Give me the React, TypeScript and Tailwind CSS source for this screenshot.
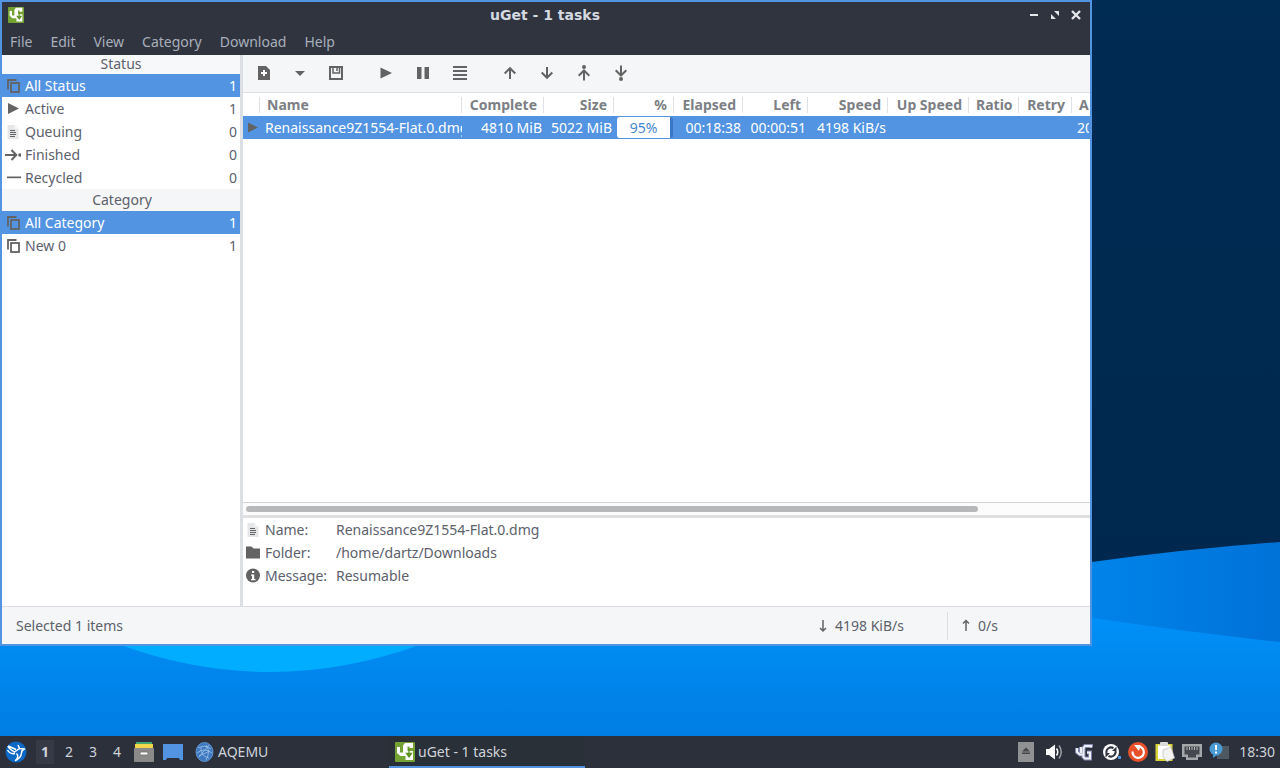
import type { ReactNode } from "react";

const menus = ["File", "Edit", "View", "Category", "Download", "Help"];

const INK = "#636363";

function CopyIcon() {
  return (
    <svg width="16" height="16" viewBox="0 0 16 16" fill="none" stroke={INK} strokeWidth="1.800">
      <path d="M3 11.500V2H11.500" />
      <rect x="6" y="5" width="8" height="9" />
    </svg>
  );
}

function PlayIcon() {
  return (
    <svg width="16" height="16" viewBox="0 0 16 16" fill={INK}>
      <path d="M3 2L14 7.500L3 13Z" />
    </svg>
  );
}

function TextFileIcon() {
  return (
    <svg width="16" height="16" viewBox="0 0 16 16">
      <path d="M2.500 1H9.500L13.500 5V15H2.500Z" fill="#e4e6e7" />
      <path d="M9.500 1V5H13.500Z" fill="#f4f5f6" />
      <path d="M5 6.500H10M5 8.500H11M5 10.500H11M5 12.500H10" stroke={INK} />
    </svg>
  );
}

function FinishedIcon() {
  return (
    <svg width="16" height="16" viewBox="0 0 16 16" fill="none" stroke={INK} strokeWidth="2">
      <path d="M2 8H11M6.500 3L11.300 8L6.500 13" />
      <circle cx="15" cy="8" r="1.800" fill={INK} stroke="none" />
      <path d="M0 8H3" />
    </svg>
  );
}

function MinusIcon() {
  return (
    <svg width="16" height="16" viewBox="0 0 16 16">
      <path d="M2 6.500H16V8.200H2Z" fill={INK} />
    </svg>
  );
}

function FolderIcon() {
  return (
    <svg width="16" height="16" viewBox="0 0 16 16">
      <path d="M1 1.500H6.500L8.500 3.500H15V13.500H1Z" fill={INK} />
    </svg>
  );
}

function InfoIcon() {
  return (
    <svg width="16" height="16" viewBox="0 0 16 16">
      <circle cx="8" cy="7.500" r="7" fill={INK} />
      <rect x="7" y="3" width="2.200" height="2" fill="#fff" />
      <path d="M6 6.500H9.200V11H10.500V12.200H6V11H7V7.700H6Z" fill="#fff" />
    </svg>
  );
}

function UgetIcon({ className }: { className: string }) {
  return (
    <svg className={className} viewBox="0 0 20 20">
      <rect width="20" height="20" rx="1" fill="#74a333" />
      <path d="M10 1H18V6H14.500V4.500H12.500V9H18V18H10.500V14H5.500L2 11V5H5V10.500H8V3.500Z" fill="#fff" />
      <path d="M14 6.500V12M11.500 11.500H16.500L14 15Z" fill="#5c8f22" stroke="#5c8f22" strokeWidth="1.300" />
    </svg>
  );
}

type Item = { label: string; count: number; icon: ReactNode; selected?: boolean };

const statusItems: Item[] = [
  { label: "All Status", count: 1, icon: <CopyIcon />, selected: true },
  { label: "Active", count: 1, icon: <PlayIcon /> },
  { label: "Queuing", count: 0, icon: <TextFileIcon /> },
  { label: "Finished", count: 0, icon: <FinishedIcon /> },
  { label: "Recycled", count: 0, icon: <MinusIcon /> },
];

const categoryItems: Item[] = [
  { label: "All Category", count: 1, icon: <CopyIcon />, selected: true },
  { label: "New 0", count: 1, icon: <CopyIcon /> },
];

function ItemList({ items, label }: { items: Item[]; label: string }) {
  return (
    <ul aria-label={label}>
      {items.map((item) => (
        <li key={item.label}>
          <button
            className={
              item.selected
                ? "flex h-[23px] w-full items-center gap-1 bg-[#5294e2] pr-[3px] pl-[3px] text-left text-white"
                : "flex h-[23px] w-full items-center gap-1 pr-[3px] pl-[3px] text-left"
            }
          >
            {item.icon}
            <span className="grow">{item.label}</span>
            <span>{item.count}</span>
          </button>
        </li>
      ))}
    </ul>
  );
}

function ToolButton({ label, narrow, children }: { label: string; narrow?: boolean; children: ReactNode }) {
  return (
    <button
      aria-label={label}
      className={narrow ? "flex h-9 w-[34px] items-center justify-center" : "flex h-9 w-9 items-center justify-center"}
    >
      <svg width="16" height="16" viewBox="0 0 16 16" fill="none" stroke={INK} strokeWidth="2">
        {children}
      </svg>
    </button>
  );
}

function Toolbar() {
  return (
    <div className="flex h-[38px] shrink-0 items-start gap-[14px] border-b border-[#dcdfe3] bg-[#f5f6f7] pl-[3px]">
      <div className="flex gap-px">
        <ToolButton label="New download">
          <path d="M2 1H10L14 5V15H2Z" fill={INK} stroke="none" />
          <path d="M8 5V11M5 8H11" stroke="#fff" />
        </ToolButton>
        <ToolButton label="More download types" narrow>
          <path d="M3 6H13L8 11Z" fill={INK} stroke="none" />
        </ToolButton>
        <ToolButton label="Save">
          <path d="M2 2H14V14H2Z" />
          <path d="M5 2V8H11.500V2" strokeWidth="1.500" />
          <path d="M9 3V6" strokeWidth="1.500" />
        </ToolButton>
      </div>
      <div className="flex gap-px">
        <ToolButton label="Start">
          <path d="M2.500 2.500L14 8L2.500 13.500Z" fill={INK} stroke="none" />
        </ToolButton>
        <ToolButton label="Pause">
          <path d="M2 2H6.500V14H2ZM9.500 2H14V14H9.500Z" fill={INK} stroke="none" />
        </ToolButton>
        <ToolButton label="Properties">
          <path d="M1 2H15M1 6H15M1 10H15M1 14H15" />
        </ToolButton>
      </div>
      <div className="flex gap-px">
        <ToolButton label="Move up">
          <path d="M8 14V3.500M2.700 8.500L8 3.200L13.300 8.500" />
        </ToolButton>
        <ToolButton label="Move down">
          <path d="M8 2V12.500M2.700 7.500L8 12.800L13.300 7.500" />
        </ToolButton>
        <ToolButton label="Move to top">
          <path d="M8 15.500V6M2.700 10.800L8 5.500L13.300 10.800" />
          <circle cx="8" cy="2" r="2" fill={INK} stroke="none" />
        </ToolButton>
        <ToolButton label="Move to bottom">
          <path d="M8 0.500V10M2.700 5.200L8 10.500L13.300 5.200" />
          <circle cx="8" cy="14" r="2" fill={INK} stroke="none" />
        </ToolButton>
      </div>
    </div>
  );
}

const columns = [
  { title: "", value: "", width: "w-[18px]" },
  { title: "Name", value: "Renaissance9Z1554-Flat.0.dmg", width: "w-[202px]", left: true },
  { title: "Complete", value: "4810 MiB", width: "w-[82px]" },
  { title: "Size", value: "5022 MiB", width: "w-[70px]" },
  { title: "%", value: "95%", width: "w-[60px]" },
  { title: "Elapsed", value: "00:18:38", width: "w-[69px]" },
  { title: "Left", value: "00:00:51", width: "w-[65px]" },
  { title: "Speed", value: "4198 KiB/s", width: "w-[80px]" },
  { title: "Up Speed", value: "", width: "w-[81px]" },
  { title: "Ratio", value: "", width: "w-[50px]" },
  { title: "Retry", value: "", width: "w-[53px]" },
  { title: "A", value: "20", width: "", left: true },
];

function Downloads() {
  return (
    <div className="min-h-0 grow overflow-hidden bg-white">
      <table className="w-full table-fixed border-collapse whitespace-nowrap">
        <thead>
          <tr className="h-[23px] text-[#7c7f84]">
            {columns.map((c, i) => (
              <th key={i} scope="col" className={"p-0 font-bold " + c.width}>
                <div
                  className={
                    (c.left ? "text-left " : "text-right ") +
                    (i === columns.length - 1 ? "" : "border-r border-[#dfe1e4] ") +
                    "mr-px h-4 pr-[6px] pl-[6px] leading-4"
                  }
                >
                  {c.title}
                </div>
              </th>
            ))}
          </tr>
        </thead>
        <tbody>
          <tr className="h-[23px] bg-[#5294e2] text-white">
            {columns.map((c, i) => (
              <td key={i} className={(c.left ? "pl-1 text-left" : "text-right") + " py-0 pr-[3px]"}>
                {i === 0 && (
                  <svg className="ml-1" width="12" height="12" viewBox="0 0 12 12" aria-label="Active">
                    <path d="M1 0.500L11 5.500L1 10.500Z" fill={INK} />
                  </svg>
                )}
                {c.title === "%" ? (
                  <div className="-mr-px ml-[2px] h-[21px] rounded-[3px] border-r-3 border-[#3a76c4] bg-white text-center leading-[21px] text-[#4a86cf]">
                    {c.value}
                  </div>
                ) : (
                  <div className={c.left ? "-mr-[2px] overflow-hidden" : ""}>{c.value}</div>
                )}
              </td>
            ))}
          </tr>
        </tbody>
      </table>
    </div>
  );
}

const details = [
  { icon: <TextFileIcon />, label: "Name:", value: "Renaissance9Z1554-Flat.0.dmg" },
  { icon: <FolderIcon />, label: "Folder:", value: "/home/dartz/Downloads" },
  { icon: <InfoIcon />, label: "Message:", value: "Resumable" },
];

function AppWindow() {
  return (
    <main className="flex min-h-0 min-w-0 grow flex-col border-2 border-[#5294e2] bg-white text-[#5c616c]">
      <header className="flex h-[26px] shrink-0 items-center bg-[#2f343f] px-[6px] text-[#d5d9e0]">
        <UgetIcon className="h-4 w-4" />
        <h1 className="grow pl-10 text-center font-[family-name:'DejaVu_Sans'] text-sm font-bold">uGet - 1 tasks</h1>
        <div className="flex gap-[5px]">
          <button aria-label="Minimize">
            <svg width="16" height="16" viewBox="0 0 16 16">
              <path d="M4 7H12V9H4Z" fill="#e4e6ea" />
            </svg>
          </button>
          <button aria-label="Maximize">
            <svg width="16" height="16" viewBox="0 0 16 16" fill="#e4e6ea">
              <path d="M7 4H12V9ZM4 7V12H9Z" />
            </svg>
          </button>
          <button aria-label="Close">
            <svg width="16" height="16" viewBox="0 0 16 16">
              <path d="M4 4L12 12M12 4L4 12" stroke="#e4e6ea" strokeWidth="2.400" />
            </svg>
          </button>
        </div>
      </header>
      <nav className="flex h-[27px] shrink-0 items-center gap-[18px] bg-[#2f343f] pl-2 text-[#a9afbb]">
        {menus.map((m) => (
          <button key={m}>{m}</button>
        ))}
      </nav>

      <div className="flex min-h-0 grow">
        <aside className="w-[241px] shrink-0 border-r-3 border-[#dcdfe3]">
          <h2 className="h-[19px] bg-[#f7f8f9] text-center leading-[18px]">Status</h2>
          <ItemList items={statusItems} label="Status" />
          <h2 className="h-[22px] bg-[#f5f6f7] pl-[2px] text-center leading-[22px]">Category</h2>
          <ItemList items={categoryItems} label="Category" />
        </aside>
        <section className="flex min-w-0 grow flex-col">
          <Toolbar />
          <Downloads />
          <div className="h-[13px] shrink-0 border-t border-[#d3d6d9] bg-[#fcfcfc] px-[3px] pt-[3px]">
            <div className="h-[6px] w-[87%] rounded-full bg-[#b7b8b9]" />
          </div>
          <dl className="h-[91px] shrink-0 border-t-3 border-[#dedfe1]">
            {details.map((d) => (
              <div key={d.label} className="flex h-[23px] items-center pl-[2px]">
                {d.icon}
                <dt className="w-[75px] pl-1">{d.label}</dt>
                <dd>{d.value}</dd>
              </div>
            ))}
          </dl>
        </section>
      </div>

      <footer className="flex h-[38px] shrink-0 items-center border-t border-[#d9dce0] bg-[#f5f6f7] pl-[14px]">
        <span className="grow">Selected 1 items</span>
        <span className="flex h-7 w-[131px] items-center gap-[6px] border-r border-[#dcdfe3]">
          <svg width="12" height="14" viewBox="0 0 12 14" fill="none" stroke={INK} strokeWidth="1.500" aria-label="Download speed">
            <path d="M6 1V11.500M3 9L6 12L9 9" />
          </svg>
          4198 KiB/s
        </span>
        <span className="flex w-[142px] items-center gap-[6px] pl-3">
          <svg width="12" height="14" viewBox="0 0 12 14" fill="none" stroke={INK} strokeWidth="1.500" aria-label="Upload speed">
            <path d="M6 12V1.500M3 4.500L6 1.500L9 4.500" />
          </svg>
          0/s
        </span>
      </footer>
    </main>
  );
}

const tray: { label: string; art: ReactNode }[] = [
  {
    label: "Removable media",
    art: (
      <>
        <rect x="-2" y="0" width="16" height="20" fill="#8f9193" />
        <path d="M2 9.500L6 5.500L10 9.500ZM2 10.500H10V12H2Z" fill="#45474a" />
      </>
    ),
  },
  {
    label: "Volume",
    art: (
      <>
        <path d="M-1 7H2L8 2.500V17.500L2 13H-1Z" fill="#fff" />
        <path d="M9.500 6.500Q12 10 9.500 13.500" fill="none" stroke="#fff" strokeWidth="1.500" />
        <path d="M12 3.500Q16.500 10 12 16.500" fill="none" stroke="#9aa0a8" strokeWidth="1.500" />
      </>
    ),
  },
  {
    label: "uGet",
    art: (
      <>
        <path d="M3 6V10L6 12.500H9M7 5V11M17 5.500V4H11L9.500 6V15L11 16.500H16V10.500H13" fill="none" stroke="#7f86ad" strokeWidth="4" />
        <path d="M3 6V10L6 12.500H9M7 5V11M17 5.500V4H11L9.500 6V15L11 16.500H16V10.500H13" fill="none" stroke="#eef0f6" strokeWidth="2" />
      </>
    ),
  },
  {
    label: "Sync",
    art: (
      <>
        <circle cx="10" cy="10" r="8" fill="#fff" />
        <path d="M5.500 11A4.600 4.600 0 0 1 12.500 6.200M14.500 9A4.600 4.600 0 0 1 7.500 13.800" fill="none" stroke="#30343f" strokeWidth="2" />
        <path d="M11 9H15.500V4.500ZM9 11H4.500V15.500Z" fill="#30343f" />
        <rect x="17" y="14" width="3" height="3" fill="#5294e2" />
      </>
    ),
  },
  {
    label: "Updates",
    art: (
      <>
        <circle cx="10" cy="10" r="10" fill="#e8502c" />
        <path d="M11 4.500A5.700 5.700 0 1 1 4.500 9.500" fill="none" stroke="#fff" strokeWidth="2.200" />
        <path d="M6 3H12.500L11 9Z" fill="#fff" />
      </>
    ),
  },
  {
    label: "Clipboard",
    art: (
      <>
        <rect x="0.500" y="2" width="17" height="17" fill="#d9d43a" />
        <rect x="3" y="3.500" width="12.500" height="13.500" fill="#fff" />
        <rect x="5" y="0" width="8" height="4" rx="1" fill="#d9dadb" />
        <path d="M8 8L16 5L19.500 16L12 19.500L8 15Z" fill="#f3f3f3" stroke="#bcbcbc" strokeWidth="0.700" />
      </>
    ),
  },
  {
    label: "Network",
    art: (
      <>
        <path d="M0 2H20V15H16V18H4V15H0Z" fill="#a4a7aa" />
        <path d="M2.500 4.500H17.500V12.500H14V15.500H6V12.500H2.500Z" fill="#45484e" />
        <path d="M5 5V8M7.500 5V8M10 5V8M12.500 5V8M15 5V8" stroke="#b5b8ba" />
      </>
    ),
  },
  {
    label: "Notifications",
    art: (
      <>
        <rect x="8" y="4" width="12" height="13" fill="#4d5863" />
        <circle cx="7" cy="7" r="6.500" fill="#4a9ad4" />
        <path d="M7 3V8M7 9.500V11.500" stroke="#fff" strokeWidth="2" />
        <path d="M4 12.500L4 16L8 13Z" fill="#4a9ad4" />
      </>
    ),
  },
];

function Taskbar() {
  return (
    <footer className="relative flex h-8 shrink-0 items-center bg-[#2b303b] pr-[5px] pl-1 text-[#cfd3da]">
      <button aria-label="Applications">
        <svg width="24" height="22" viewBox="0 0 24 22">
          <circle cx="12" cy="11" r="10.500" fill="#0b68c4" />
          <path
            d="M4 5Q5 8 10.500 11L15.500 7.500L14 4M4 5L12 8.500M3.500 9Q6 13.500 11 12.500M15.500 7.500L20.500 8Q17.500 9 17.500 12Q17 17 11.500 19.500Q15.500 15.500 12.500 12.500"
            fill="none"
            stroke="#fff"
            strokeWidth="1.500"
            strokeLinejoin="round"
          />
        </svg>
      </button>
      <div className="flex pl-[5px]">
        {["1", "2", "3", "4"].map((n) => (
          <button
            key={n}
            className={n === "1" ? "mx-[3px] h-6 w-[18px] bg-[#353a46] font-bold" : "mx-[3px] h-6 w-[18px]"}
          >
            {n}
          </button>
        ))}
      </div>
      <div className="flex gap-2 pl-1">
        <button aria-label="File manager">
          <svg width="22" height="22" viewBox="0 0 22 22">
            <rect x="3" y="1" width="16" height="5" fill="#3fa873" />
            <rect x="2" y="3" width="18" height="5" fill="#f2d64b" />
            <rect x="1" y="7" width="20" height="14" rx="1" fill="#8a8a88" />
            <rect x="7" y="11" width="8" height="3" rx="1" fill="#fff" stroke="#6b6b6b" strokeWidth="0.800" />
          </svg>
        </button>
        <button aria-label="Show desktop">
          <svg width="20" height="18" viewBox="0 0 20 18">
            <path d="M0 1H20V17H17L16 15H4L3 17H0Z" fill="#5294e2" />
          </svg>
        </button>
      </div>
      <button className="flex w-[194px] items-center gap-1 pl-[12px]">
        <svg width="19" height="20" viewBox="0 0 19 20" fill="none" stroke="#9fc3e8" strokeWidth="0.800">
          <ellipse cx="9.500" cy="10" rx="8.500" ry="9.500" fill="#3d78c0" stroke="#6ea2dc" />
          <path d="M3 6Q10 2 16 7M2 11Q9 5 17 11M4 15L14 3M6 5Q5 14 14 16M11 3Q16 9 11 18M4 14L15 9" />
        </svg>
        AQEMU
      </button>
      <button className="ml-3 flex h-8 w-[196px] items-center gap-[3px] border-b-2 border-[#5294e2] bg-[#2a3038] pt-[2px] pl-[6px]">
        <UgetIcon className="h-5 w-5" />
        uGet - 1 tasks
      </button>
      <div className="flex grow justify-end gap-[7px]">
        {tray.map((t) => (
          <button key={t.label} aria-label={t.label}>
            <svg className="overflow-visible" width="20" height="20" viewBox="0 0 20 20">
              {t.art}
            </svg>
          </button>
        ))}
      </div>
      <time className="pl-[10px]">18:30</time>
    </footer>
  );
}

function Wallpaper() {
  return (
    <svg className="absolute inset-0 h-full w-full" viewBox="0 0 1280 768" preserveAspectRatio="none" aria-hidden="true">
      <defs>
        <linearGradient id="night" x1="0" y1="0" x2="0" y2="1">
          <stop offset="0" stopColor="#002b53" />
          <stop offset="1" stopColor="#00274c" />
        </linearGradient>
        <linearGradient id="ridge" x1="0.850" y1="0" x2="1" y2="0">
          <stop offset="0" stopColor="#0084ea" />
          <stop offset="1" stopColor="#0072d8" />
        </linearGradient>
        <linearGradient id="sea" x1="0" y1="0" x2="0" y2="1">
          <stop offset="0" stopColor="#0090f8" />
          <stop offset="0.400" stopColor="#0086ec" />
          <stop offset="1" stopColor="#0078de" />
        </linearGradient>
      </defs>
      <rect width="1280" height="768" fill="url(#night)" />
      <path d="M0 768V650L1092 562Q1186 549 1280 542V768Z" fill="url(#ridge)" />
      <path d="M0 618H1092Q1186 632 1280 642V768H0Z" fill="url(#sea)" />
      <path d="M118 644Q270 700 422 644Z" fill="#00adff" />
    </svg>
  );
}

export default function App() {
  return (
    <div className="relative flex h-screen flex-col overflow-hidden font-['Noto_Sans',sans-serif] text-sm">
      <Wallpaper />
      <div className="relative flex min-h-0 grow pr-47 pb-[90px]">
        <AppWindow />
      </div>
      <Taskbar />
    </div>
  );
}
